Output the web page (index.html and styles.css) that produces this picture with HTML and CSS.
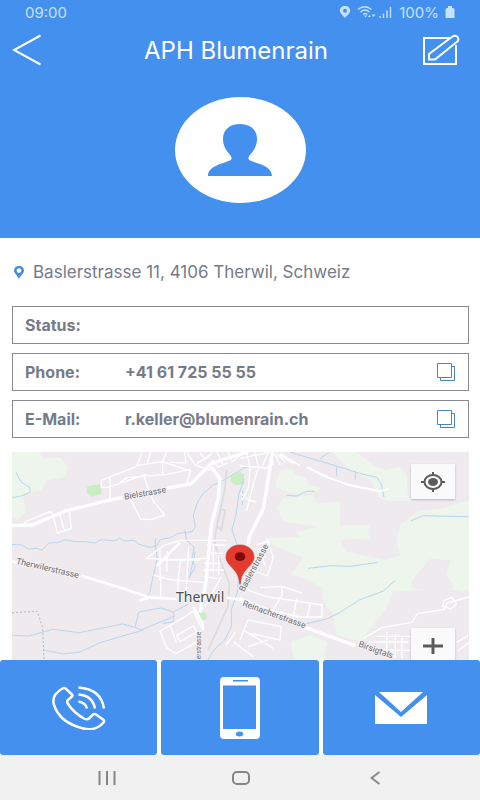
FILE: index.html
```html
<!DOCTYPE html>
<html lang="de">
<head>
<meta charset="utf-8">
<meta name="viewport" content="width=device-width, initial-scale=1">
<title>APH Blumenrain</title>
<link rel="stylesheet" href="styles.css">
</head>
<body>
<header class="hero">
  <div class="status-bar">
    <span>09:00</span>
    <span class="status-icons">
      <svg width="12" height="14" viewBox="0 0 12 14"><path fill="currentColor" fill-rule="evenodd" d="M6 1C2.800 1 .8 3 .8 5.600.8 8.500 4 10.500 6 13c2-2.500 5.200-4.500 5.200-7.400C11.200 3 9.200 1 6 1Zm0 2.700a2 2 0 1 1 0 4 2 2 0 0 1 0-4Z"/></svg>
      <svg width="36" height="14" viewBox="0 0 36 14"><g fill="none" stroke="currentColor" stroke-width="1.400"><path d="M1 4.500Q7.500-1 14.500 4.500M3.500 7Q8 3 12.500 7M6 9.500Q8 7.500 10.500 9.500M23 13v-2M26.500 13V8.500M30 13V5.500M33.500 13V2"/></g><path fill="currentColor" d="m7 10.500 1.500 2 1.500-2ZM11 12l1.500-2 1.500 2ZM14.500 9.500h4l-2 2.500Z"/></svg>
      <span>100%</span>
      <svg width="10" height="14" viewBox="0 0 10 14"><path fill="currentColor" d="M3 1h4v2h1q1.500 0 1.500 1.500V13H.5V4.500Q.5 3 2 3h1Z"/></svg>
    </span>
  </div>
  <div class="title-bar">
    <button class="icon-button" type="button" aria-label="Zurück">
      <svg width="30" height="32" viewBox="0 0 30 32"><path fill="none" stroke="currentColor" stroke-width="2" d="M28.500 1.500 2 16l26.500 14.500"/></svg>
    </button>
    <h1>APH Blumenrain</h1>
    <button class="icon-button" type="button" aria-label="Bearbeiten">
      <svg width="38" height="32" viewBox="0 0 38 32"><g fill="none" stroke="currentColor" stroke-width="2"><path d="M29 4H2v26h32V11"/><path d="M7 25.500V20L30.500 2.500Q33 1 35 2.500T36 7L13 25.500Z"/></g></svg>
    </button>
  </div>
  <div class="avatar">
    <svg width="64" height="52" viewBox="0 0 64 52"><path fill="currentColor" d="M32 0C21.500 0 15 6 15 15c0 8 4.500 13 7.500 16.500 1.500 2 1.500 4-.5 5C15 39.500 0 42 0 52h64c0-10-15-12.500-22-15.500-2-1-2-3-.5-5C44.500 28 49 23 49 15 49 6 42.500 0 32 0Z"/></svg>
  </div>
</header>

<main class="details">
  <p class="address">
    <svg width="10" height="13" viewBox="0 0 10 13"><path fill="currentColor" fill-rule="evenodd" d="M5 0C2 0 0 2 0 4.600 0 7.500 3.500 9.500 5 13c1.500-3.500 5-5.500 5-8.400C10 2 8 0 5 0Zm0 2.200a2.400 2.400 0 1 1 0 4.800 2.400 2.400 0 0 1 0-4.800Z"/></svg>
    <span>Baslerstrasse 11, 4106 Therwil, Schweiz</span>
  </p>
  <dl class="fields">
    <div class="field"><dt>Status:</dt><dd></dd></div>
    <div class="field"><dt>Phone:</dt><dd>+41 61 725 55 55</dd>
      <button class="copy" type="button" aria-label="Telefonnummer kopieren"><svg width="18" height="18" viewBox="0 0 18 18"><path fill="none" stroke="currentColor" d="M.5.500h14v14H.5ZM14.500 3.500h3v14h-14v-3"/></svg></button>
    </div>
    <div class="field"><dt>E-Mail:</dt><dd>r.keller@blumenrain.ch</dd>
      <button class="copy" type="button" aria-label="E-Mail kopieren"><svg width="18" height="18" viewBox="0 0 18 18"><path fill="none" stroke="currentColor" d="M.5.500h14v14H.5ZM14.500 3.500h3v14h-14v-3"/></svg></button>
    </div>
  </dl>

  <section class="map" aria-label="Karte">
    <svg class="map-drawing" viewBox="36 21 1371 624" preserveAspectRatio="xMidYMin slice">
      <g fill="#edf5ed">
        <path d="M36 21h84l12 20 48-6 24 30-6 30-60 12-12 30-56 8 6 60-24 20-16-10Z"/>
        <path d="M994 21h76l60 45 28 10 40-12 22 25 4 68 28 12h-90l-28-12-20-50-60-30Z"/>
        <path d="M840 75l34-6 14 22 32 8 6 20 36 8-8 12-54 12-40-10-36-16Z"/>
        <path d="M830 190l20-30 90-10 10 25 70-5v70h88v40l-88 5 20 35 120 25 40-15-10-40 10-50 50-40 80-10 77-25v275l-77-10-150 10-20 50-40 50-40 50-70-20-10-60-35-50 5-30-65-35-35-5 40-50-90-40-30-20 110-5-10-13 60-17-100-15Z"/>
        <path d="M872 590l60-20 50 20-10 55h-90Z"/>
      </g>
      <path fill="#eeeaee" d="M1235 410l54-68 64 4-14 40 22 40-30 30-40-20-54-6Z"/>
      <g fill="#c9eec4"><path d="m262 124 38-6 6 28-32 10-14-14ZM692 90l28-10 12 8v30l-24 2-16-10Z"/><circle cx="608" cy="513" r="12"/></g>

      <g fill="none" stroke="#b8d6ee" stroke-width="3" stroke-linejoin="round">
        <path d="M48 82l14 28 28 18v14l-22 10-32 6M36 298l30 2 20 12 26-2 14 6 20-22 30-2 20-8 28 6h30l30 4 20-10 40 4 14-8 18 8 26-2 16 12 34 10 20-8 8-16 32-6 20-12 44-6 10-16-6-34 12-36 14-24 34-30 30-14 60-36 20-6"/>
        <path d="M554 256l6 30 22 20-6 40 10 20-20 34M466 280v20l6 40-14 60-8 40-12 24M732 100l-16 50-8 60-12 45 14 40 6 60-2 80-20 60v50l-20 40-32 30-22 35"/>
        <path d="M36 571l50 2 72-20 80 10 130-26 36 10 20 8 100-42M130 615l60 12 50-6 60-28 130-38M406 545l10-44 66-12 38 12v30l-30 4M520 501l46-24"/>
        <path d="M868 21l54 16 84 25 80 25 44 10 14 20 8 40M960 41l28-20M1010 63v30M1066 79v25M860 151l30 2 30-14h24M1232 228l36-16 70 2 69 1"/>
        <path d="M924 370l70-8 58 2 82-12M880 532l40 4 60-14 40-20 60-38 70-26 36-32"/>
        <path d="M586 320l-18 78M728 135v45"/>
      </g>
      <g fill="none" stroke="#dadcdc" stroke-width="5"><path d="M680 75l-6 60-26 120-4 40 20 60 24 60-4 70-60 130M662 195l-12 50 14 10 12-60Z"/></g>

      <g fill="none" stroke="#fff" stroke-width="4" stroke-linejoin="round">
        <path d="M70 238l10-10 70-28 10 10M160 212l12 52 42-14-6-50M180 210l14 50M330 160V98M304 106v20l16 2 30-10 90-30M304 106l106-42 16-43M410 62l76-12 86 28-12 38M360 112l20-14 120-10 70-14M440 60l12-39M488 90v-40l12-29M510 52l48 2-4-33M430 88l10 30 20 50 34 42-40 14-32-2-30-58M560 21l26 40 44 14M590 56l38-25M600 24l16 20 20-20M636 45l18 22 30-14M650 21l20 40M684 21l12 30 24-20"/>
        <path d="M720 40l60-12 30-7M720 63l80 6 20-15M740 21l10 45-4 60-20 40M764 21l12 46-16 50-20 80M722 145l22 20 26 6M786 65l20-44M820 60l-6-30M840 60l-16-34M855 50l-26-26M880 55l-40-25M900 62l-60-36"/>
        <path d="M440 340l50-38 50-16h140M436 340l86 4 100-4M460 390l50 14 100 8M480 315v90M502 318l-2 62M482 385v70M542 345l-8 62v50M566 305l-8 140M480 345h120M620 300h60M620 325h50M612 355h50M612 375h60M640 300v80M656 330v60M612 395l40 6M664 395l-50 90"/>
        <path d="M770 300l34-12 16 50-18 55-30-12M758 360l40-28M776 312l20 50M780 428l66-4 60 20M846 424v26M740 434l56 20 170 26v36h-66l-80-18-100-40M846 450l-30 50M890 460l-12 66M930 476l-8 40"/>
        <path d="M480 558l70-40 30-20 24 50M480 558l20 50 30 20M510 542l20 50M530 572l50-30 10 20-50 28ZM528 626l60-34M708 560l-30 40M720 585l24-60 100 20-4 40-90-20M700 590l60 45M744 605l60-20M730 555l90 55"/>
        <path d="M1090 580l56-32 90-16 16-26 80-12 10-20 65-18M1328 484l4-18 24-8 14 18-18 16ZM1130 574h160M1106 591h120M1120 616h110M1160 560v80M1186 568v70M1206 575v65M1370 592l34-20M1374 618l33-26"/>
      </g>
      <g fill="none" stroke="#fff" stroke-width="8" stroke-linejoin="round">
        <path stroke-width="10" d="M36 242l60-2 100-42 120-30 50-10M500 130l74-14 60-60 60-20 50-15M634 66l26 36-6 60-20 80-8 80-8 90-18 90"/>
        <path stroke-width="10" d="M818 21l-18 110-10 60-42 84-8 50"/>
        <path d="M36 348l14 6M244 392l130 40 76 26 80 4M680 458l40 6 30 20M580 486l28 50v20M540 293l-70 70M418 467l34-10"/>
        <path stroke-width="10" d="M900 542l100 36 66 24"/>
        <path stroke-width="6" d="M920 66l60 30 70 25 90 18 26-8"/>
      </g>
      <path fill="none" stroke="#b9b8ba" stroke-width="3" stroke-dasharray="6 6" d="M36 503l76-4 16 50 4 96"/>

      <g class="streets">
        <text transform="translate(374 164) rotate(-10)">Bielstrasse</text>
        <text transform="translate(47 356) rotate(13)">Therwilerstrasse</text>
        <text transform="translate(732 442) rotate(-62)">Baslerstrasse</text>
        <text transform="translate(726 482) rotate(20)">Reinacherstrasse</text>
        <text transform="translate(1074 604) rotate(20)">Birsigtals</text>
        <text class="minor" transform="translate(604 643) rotate(-90)">erstrasse</text>
      </g>
      <text class="town" x="528" y="470">Therwil</text>
      <path fill="#e53a2f" stroke="#c7342b" stroke-width="2" d="M720 418c-5-34-14-39-30-57-8-9-12-17-12-24 0-22 18-37 42-37s42 15 42 37c0 7-4 15-12 24-16 18-25 23-30 57Z"/>
      <ellipse cx="720" cy="335" rx="16" ry="13" fill="#790d0d"/>
    </svg>
    <div class="map-controls">
      <button class="map-button" type="button" aria-label="Mein Standort"><svg width="26" height="22" viewBox="0 0 26 22"><g fill="none" stroke="#5c5c5c" stroke-width="2"><ellipse cx="13" cy="11" rx="8.500" ry="7"/><path d="M13 1v4M13 17v4M1 11h4M21 11h4"/></g><ellipse cx="13" cy="11" rx="5" ry="4" fill="#5c5c5c"/></svg></button>
      <button class="map-button" type="button" aria-label="Vergrössern"><svg width="20" height="16" viewBox="0 0 20 16"><path stroke="#5c5c5c" stroke-width="3" d="M0 8h20M10 0v16"/></svg></button>
    </div>
  </section>
</main>

<nav class="actions" aria-label="Kontakt">
  <button type="button" aria-label="Anrufen"><svg width="54" height="44" viewBox="0 0 54 44"><g fill="none" stroke="currentColor" stroke-width="2.500" stroke-linejoin="round"><path d="M10.500 2.500Q12 1.500 13.500 2.500L20 8.500Q21 9.500 20 10.500l-4 3.500q-1.500 1 0 4 6 9 16 14.500 3 1.500 5 0l4-4q1.500-1 3 0l7 5q2 1.500.500 3-8 9-20 6Q8 37 2 19-1 9 10.500 2.500Z"/><path d="M26.500 15.500q7 1 8.500 7M26.500 8.500q14 1 16.500 14M26.500 1.500Q49 3 52 22.500"/></g></svg></button>
  <button type="button" aria-label="Nachricht senden"><svg width="40" height="62" viewBox="0 0 40 62"><path fill="currentColor" fill-rule="evenodd" d="M4 0h32q4 0 4 4v54q0 4-4 4H4q-4 0-4-4V4Q0 0 4 0ZM3 8.500V52h33V8.500ZM13 3v1.500h15V3ZM19.500 54.500c-5 0-5 5 0 5s5-5 0-5Z"/></svg></button>
  <button type="button" aria-label="E-Mail senden"><svg width="52" height="32" viewBox="0 0 52 32"><path fill="currentColor" d="M4 0h44L26 20ZM0 3l26 22L52 3v29H0Z"/></svg></button>
</nav>

<nav class="system-nav" aria-label="System">
  <button type="button" aria-label="Letzte Apps"><svg width="18" height="14" viewBox="0 0 18 14"><path stroke="currentColor" stroke-width="2" d="M1.500 0v14M9 0v14M16.500 0v14"/></svg></button>
  <button type="button" aria-label="Startseite"><svg width="18" height="14" viewBox="0 0 18 14"><rect x="1" y="1" width="16" height="12" rx="4" fill="none" stroke="currentColor" stroke-width="2"/></svg></button>
  <button type="button" aria-label="Zurück"><svg width="10" height="14" viewBox="0 0 10 14"><path fill="none" stroke="currentColor" stroke-width="2" d="M9.500 1 1.500 7l8 6"/></svg></button>
</nav>
</body>
</html>
```
FILE: styles.css
```css
* { box-sizing: border-box; }

body {
  margin: 0;
  height: 100vh;
  display: flex;
  flex-direction: column;
  background: #fff;
  color: #757b88;
  font-family: Inter, Roboto, sans-serif;
  font-size: 16px;
}

button {
  display: flex;
  align-items: center;
  justify-content: center;
  padding: 0;
  border: 0;
  background: none;
  color: inherit;
}

svg { display: block; flex: none; }

.hero {
  padding-bottom: 35px;
  background: #4390ef;
  color: #fff;
}

.status-bar {
  display: flex;
  align-items: center;
  justify-content: space-between;
  height: 24px;
  padding: 0 25px;
  color: #c6e2fd;
  font-size: 15px;
}

.status-icons { display: flex; align-items: center; gap: 6px; }

.title-bar {
  display: flex;
  align-items: center;
  justify-content: space-between;
  height: 52px;
  padding: 0 20px 0 12px;
}

.title-bar h1 {
  margin: 0;
  font-size: 24px;
  font-weight: 400;
}

.icon-button {
  justify-content: flex-start;
  width: 38px;
}

.avatar {
  display: flex;
  align-items: center;
  justify-content: center;
  width: 131px;
  height: 106px;
  margin: 21px auto 0;
  border-radius: 50%;
  background: #fff;
  color: #4390ef;
}

.details {
  flex: 1;
  min-height: 0;
  display: flex;
  flex-direction: column;
  padding: 0 11px 0 12px;
}

.address {
  display: flex;
  align-items: center;
  gap: 9px;
  height: 68px;
  margin: 0;
  padding-left: 2px;
  font-size: 17px;
}

.address svg { color: #4390d8; }

.fields {
  display: flex;
  flex-direction: column;
  gap: 9px;
  margin: 0 0 14px;
}

.field {
  display: flex;
  align-items: center;
  height: 38px;
  padding: 0 13px 0 12px;
  border: 1px solid #8a8b90;
  font-weight: 700;
}

.field dt { width: 100px; }
.field dd { flex: 1; margin: 0; }

.copy { color: #4688b8; }

.map {
  position: relative;
  flex: 1;
  min-height: 0;
  overflow: hidden;
  background: #eeeaee;
}

.map-drawing { width: 100%; height: 100%; }

.streets {
  fill: #6b6c70;
  stroke: #f5f3f5;
  stroke-width: 6px;
  paint-order: stroke;
  font-family: Roboto, sans-serif;
  font-size: 26px;
}

.streets .minor { font-size: 20px; }

.town {
  fill: #4b5054;
  stroke: #f5f3f5;
  stroke-width: 6px;
  paint-order: stroke;
  font-family: "Noto Sans", sans-serif;
  font-size: 42px;
}

.map-controls {
  position: absolute;
  top: 12px;
  right: 14px;
  display: flex;
  flex-direction: column;
  gap: 129px;
}

.map-button {
  width: 44px;
  height: 35px;
  background: #fafafa;
  box-shadow: 0 1px 2px #b8b5b8;
}

.actions {
  display: grid;
  grid-template-columns: repeat(3, 1fr);
  gap: 4px;
}

.actions button {
  height: 95px;
  border-radius: 3px;
  background: #4390ef;
  color: #fff;
}

.system-nav {
  display: flex;
  align-items: center;
  justify-content: space-between;
  height: 45px;
  padding: 0 96px 0 98px;
  background: #f1f1f1;
  color: #858585;
}

.system-nav button { width: 18px; }
```
